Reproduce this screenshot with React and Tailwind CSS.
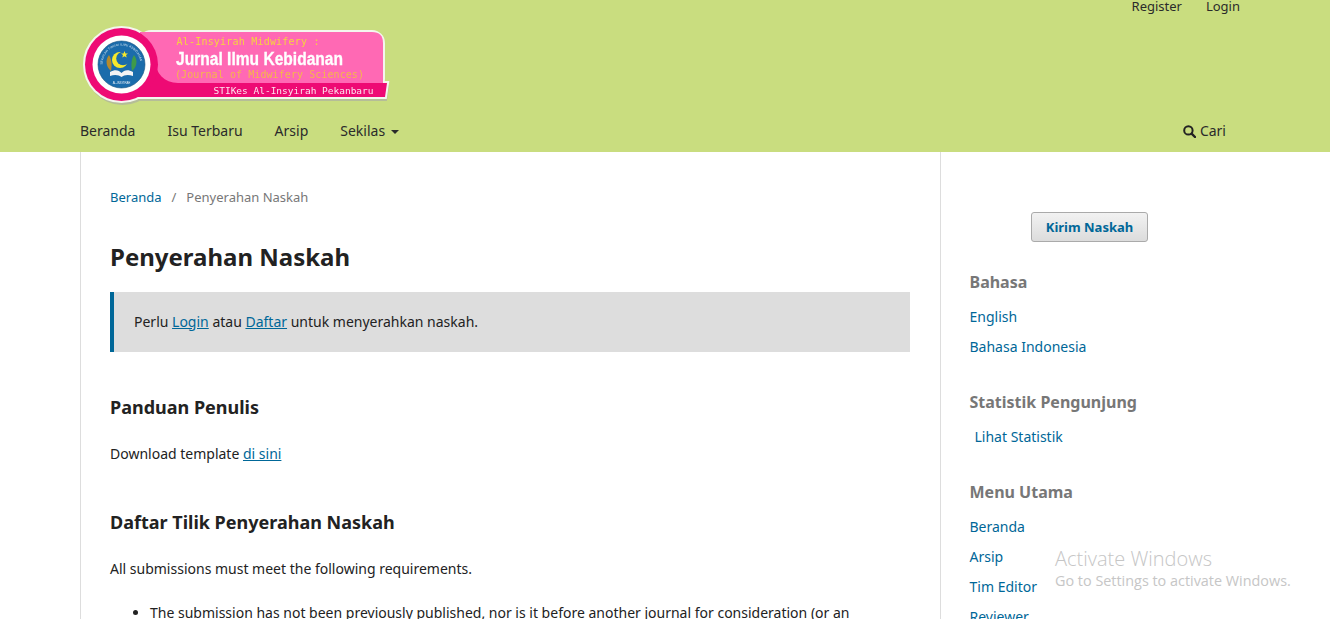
const font = { fontFamily: '"Noto Sans", sans-serif' };

function Logo() {
  const outline = (
    <>
      <circle cx="41.5" cy="40.5" r="36.5" />
      <rect x="60" y="8" width="243" height="58" rx="11" />
      <path d="M60 59 L307 59 L305 73 L60 73 Z" />
    </>
  );

  return (
    <svg width="312" height="84" viewBox="0 0 312 84" className="block blur-[0.3px]">
      <g fill="#8f8f8f" stroke="#a8a8a8" strokeWidth="2" opacity="0.6" transform="translate(1 3)">
        {outline}
      </g>
      <g fill="#f4f6ee" stroke="#f4f6ee" strokeWidth="4">
        {outline}
      </g>
      <path d="M60 8 H292 Q303 8 303 19 V64 H60 Z" fill="#ff69b4" />
      <path d="M74 34 C76 50 84 59 98 59 L307 59 L305 73 L50 73 L50 34 Z" fill="#ee0a74" />
      <circle cx="41.5" cy="40.5" r="36.5" fill="#ee0a74" />
      <circle cx="41.5" cy="40.5" r="29" fill="#ffffff" />
      <circle cx="41.5" cy="40.5" r="23.5" fill="#1b6cab" />
      <circle cx="41.5" cy="40.5" r="23.5" fill="none" stroke="#14507f" strokeWidth="0.6" />

      {/* emblem */}
      <defs>
        <path id="ring" d="M22.5 40.5 A19 19 0 0 1 60.5 40.5" />
      </defs>
      <text fontSize="3" fill="#dbeaf4" fontFamily="Liberation Sans, sans-serif">
        <textPath href="#ring" textLength="56">SEKOLAH TINGGI ILMU KEBIDANAN</textPath>
      </text>
      <circle cx="40" cy="36" r="8" fill="#f6e92c" />
      <circle cx="43" cy="34.5" r="6.8" fill="#1b6cab" />
      <path d="M44.5 27 l1 2.4 2.5.1-2 1.6.7 2.5-2.2-1.4-2.2 1.4.7-2.5-2-1.6 2.5-.1z" fill="#f6e92c" />
      <path d="M29 31 C25 36 26 43 31 47 C32 41 32 36 29 31 Z" fill="#b58a2c" />
      <path d="M54 31 C58 36 57 43 52 47 C51 41 51 36 54 31 Z" fill="#3f9a4a" />
      <path d="M30 48 C35 45 39 46 41.5 49 C44 46 48 45 53 48 L53 52 C48 50 44 51 41.5 53 C39 51 35 50 30 52 Z" fill="#f4f4f4" />
      <text x="41.5" y="59.5" fontSize="2.8" textAnchor="middle" fill="#e8f0f6" fontFamily="Liberation Sans, sans-serif">AL-INSYIRAH</text>

      {/* words */}
      <text x="96.5" y="21" fontSize="10" fill="#f5d33f" fontFamily="DejaVu Sans Mono, monospace" textLength="143" lengthAdjust="spacing">Al-Insyirah Midwifery :</text>
      <text x="96" y="40.5" fontSize="18" fontWeight="700" fill="#ffffff" stroke="#ffffff" strokeWidth="0.3" fontFamily="Liberation Sans, sans-serif" textLength="167" lengthAdjust="spacingAndGlyphs">Jurnal Ilmu Kebidanan</text>
      <text x="95" y="54" fontSize="10" fill="#f5b84a" fontFamily="DejaVu Sans Mono, monospace" textLength="189" lengthAdjust="spacing">(Journal of Midwifery Sciences)</text>
      <text x="133.5" y="70" fontSize="9.5" fill="#fde4ef" fontFamily="DejaVu Sans Mono, monospace" textLength="160" lengthAdjust="spacing">STIKes Al-Insyirah Pekanbaru</text>
    </svg>
  );
}

function SideLink({ children, className = "" }) {
  return <div className={`h-[30px] leading-[30px] text-[#006798] ${className}`}>{children}</div>;
}

function SideBlock({ title, children }) {
  return (
    <div className="mb-[25px]">
      <h2 className="mb-[5px] h-[30px] text-[16px] leading-[30px] font-bold text-[#777777]">{title}</h2>
      {children}
    </div>
  );
}

export default function App() {
  return (
    <div className="relative h-[619px] overflow-hidden bg-white text-[14px] text-[#222222]" style={font}>
      <header className="h-[152px] bg-[#c9dd7f]">
        <div className="mx-auto w-[1170px]">
          <div className="flex h-[24px] justify-end gap-[24px] pr-[10px] text-[13px] leading-[12px] text-[#2b2b2b]">
            <span>Register</span>
            <span>Login</span>
          </div>
          <div className="h-[84px]">
            <Logo />
          </div>
          <nav className="mt-[9px] flex h-[28px] items-center justify-between pr-[24px] leading-[28px] text-[#2b2b2b]">
            <div className="flex gap-[32px]">
              <span>Beranda</span>
              <span>Isu Terbaru</span>
              <span>Arsip</span>
              <span className="flex items-center gap-[6px]">
                Sekilas
                <span className="mt-[2px] h-0 w-0 border-x-[4px] border-t-[4px] border-x-transparent border-t-[#2b2b2b]" />
              </span>
            </div>
            <span className="flex items-center gap-[4px]">
              <svg width="13" height="13" viewBox="0 0 13 13" fill="none" stroke="#222222">
                <circle cx="5.4" cy="5.4" r="4.2" strokeWidth="2" />
                <path d="M8.6 8.6 L12 12" strokeWidth="2.4" strokeLinecap="round" />
              </svg>
              Cari
            </span>
          </nav>
        </div>
      </header>

      <div className="mx-auto flex w-[1170px]">
        <main className="w-[861px] border-x border-[#dddddd] pr-[30px] pl-[29px]">
          <div className="mt-[36px] flex h-[20px] items-center text-[13px] text-[#777777]">
            <span className="text-[#006798]">Beranda</span>
            <span className="mx-[10px]">/</span>
            <span>Penyerahan Naskah</span>
          </div>
          <h1 className="mt-[29px] h-[40px] text-[24px] leading-[40px] font-bold">Penyerahan Naskah</h1>
          <div className="mt-[15px] flex h-[60px] items-center border-l-4 border-[#006798] bg-[#dddddd] pb-[2px] pl-[20px]">
            <p>
              Perlu <span className="text-[#006798] underline">Login</span> atau{" "}
              <span className="text-[#006798] underline">Daftar</span> untuk menyerahkan naskah.
            </p>
          </div>
          <h2 className="mt-[40px] h-[30px] text-[18px] leading-[30px] font-bold">Panduan Penulis</h2>
          <p className="mt-[17px] h-[30px] leading-[30px]">
            Download template <span className="text-[#006798] underline">di sini</span>
          </p>
          <h2 className="mt-[38px] h-[30px] text-[18px] leading-[30px] font-bold">Daftar Tilik Penyerahan Naskah</h2>
          <p className="mt-[17px] h-[30px] leading-[30px]">All submissions must meet the following requirements.</p>
          <ul className="mt-[19px] list-disc pl-[40px] leading-[20px]">
            <li>
              The submission has not been previously published, nor is it before another journal for consideration (or an
              explanation has been provided in Comments to the Editor).
            </li>
          </ul>
        </main>

        <aside className="ml-[28.5px] w-[240px] pt-[60px]">
          <div className="mb-[25px] flex justify-center">
            <button className="h-[30px] w-[117px] rounded-[3px] border border-[#aaaaaa] bg-gradient-to-b from-[#f2f2f2] to-[#dcdcdc] pt-[1px] text-[13px] font-bold text-[#006798]">
              Kirim Naskah
            </button>
          </div>
          <SideBlock title="Bahasa">
            <SideLink>English</SideLink>
            <SideLink>Bahasa Indonesia</SideLink>
          </SideBlock>
          <SideBlock title="Statistik Pengunjung">
            <SideLink className="pl-[5px]">Lihat Statistik</SideLink>
          </SideBlock>
          <SideBlock title="Menu Utama">
            <SideLink>Beranda</SideLink>
            <SideLink>Arsip</SideLink>
            <SideLink>Tim Editor</SideLink>
            <SideLink>Reviewer</SideLink>
          </SideBlock>
        </aside>
      </div>

      {/* windows watermark */}
      <div className="absolute top-[545px] left-[1055px] text-[#c6c6c6]" style={{ fontFamily: '"Open Sans", sans-serif' }}>
        <div className="text-[20px] leading-[27px] font-light">Activate Windows</div>
        <div className="text-[14.4px] leading-[18px]">Go to Settings to activate Windows.</div>
      </div>
    </div>
  );
}
